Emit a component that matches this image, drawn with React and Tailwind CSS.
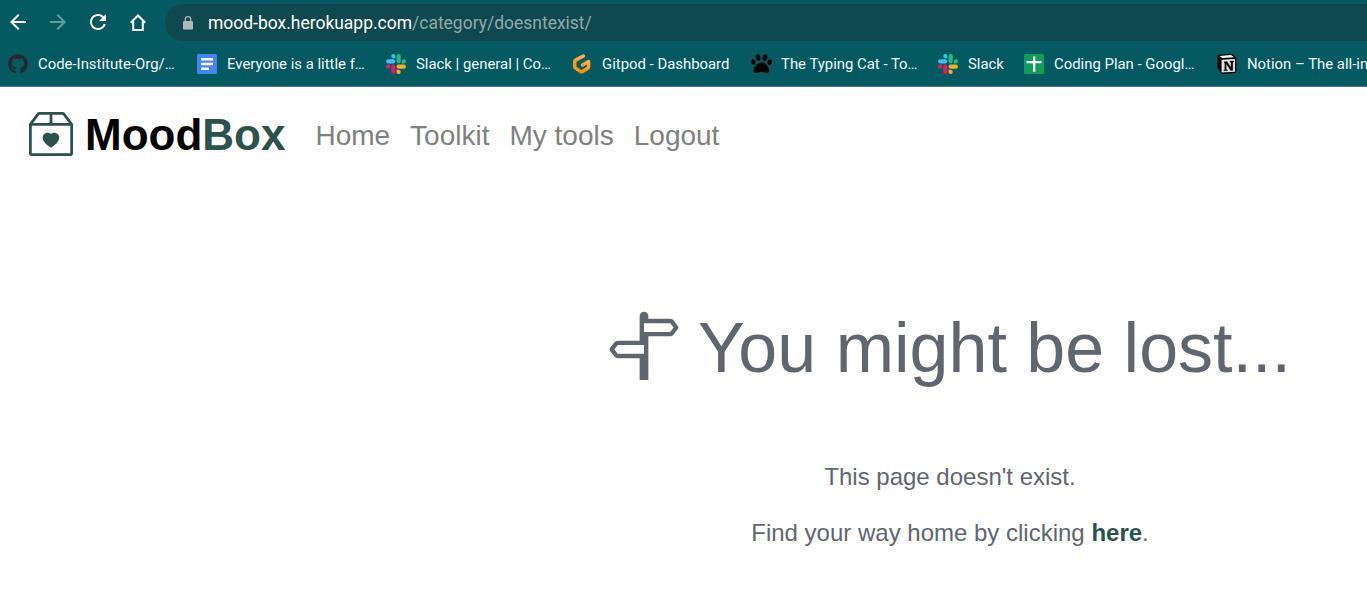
import { BsBox2Heart, BsSignpostSplit } from "react-icons/bs";
import { FaGithub, FaPaw } from "react-icons/fa";
import { MdArrowBack, MdArrowForward, MdRefresh } from "react-icons/md";

function HomeIcon() {
  return (
    <svg viewBox="0 0 16 17" className="h-[17px] w-4" fill="none" stroke="currentColor" strokeWidth="2">
      <path d="M0.7 8.8 8 1.5l7.3 7.3M3.2 7v9h9.6V7" />
    </svg>
  );
}

function LockIcon() {
  return (
    <svg viewBox="0 0 10 14" className="mx-[3px] h-3.5 w-2.5 text-[#b0b7ba]">
      <rect y="5" width="10" height="8.6" rx="1.1" fill="currentColor" />
      <path d="M2.3 5.5V3.4a2.7 2.7 0 0 1 5.4 0v2.1" fill="none" stroke="currentColor" strokeWidth="1.3" />
    </svg>
  );
}

function DocsIcon() {
  return (
    <svg viewBox="0 0 20 20" className="size-5">
      <rect width="20" height="20" rx="1.5" fill="#4285f4" />
      <path d="M4 4h12v2.4H4zM4 8.8h12v2.4H4zM4 13.6h8v2.4H4z" fill="#fff" />
    </svg>
  );
}

function SlackIcon() {
  return (
    <svg viewBox="0 0 24 24" className="size-5">
      <path fill="#e01e5a" d="M5.042 15.165a2.528 2.528 0 0 1-2.52 2.523A2.528 2.528 0 0 1 0 15.165a2.527 2.527 0 0 1 2.522-2.52h2.52v2.52zM6.313 15.165a2.527 2.527 0 0 1 2.521-2.52 2.527 2.527 0 0 1 2.521 2.52v6.313A2.528 2.528 0 0 1 8.834 24a2.528 2.528 0 0 1-2.521-2.522v-6.313z" />
      <path fill="#36c5f0" d="M8.834 5.042a2.528 2.528 0 0 1-2.521-2.52A2.528 2.528 0 0 1 8.834 0a2.528 2.528 0 0 1 2.521 2.522v2.52H8.834zM8.834 6.313a2.528 2.528 0 0 1 2.521 2.521 2.528 2.528 0 0 1-2.521 2.521H2.522A2.528 2.528 0 0 1 0 8.834a2.528 2.528 0 0 1 2.522-2.521h6.312z" />
      <path fill="#2eb67d" d="M18.956 8.834a2.528 2.528 0 0 1 2.522-2.521A2.528 2.528 0 0 1 24 8.834a2.528 2.528 0 0 1-2.522 2.521h-2.522V8.834zM17.688 8.834a2.528 2.528 0 0 1-2.523 2.521 2.527 2.527 0 0 1-2.52-2.521V2.522A2.527 2.527 0 0 1 15.165 0a2.528 2.528 0 0 1 2.523 2.522v6.312z" />
      <path fill="#ecb22e" d="M15.165 18.956a2.528 2.528 0 0 1 2.523 2.522A2.528 2.528 0 0 1 15.165 24a2.527 2.527 0 0 1-2.52-2.522v-2.522h2.52zM15.165 17.688a2.527 2.527 0 0 1-2.52-2.523 2.526 2.526 0 0 1 2.52-2.52h6.313A2.527 2.527 0 0 1 24 15.165a2.528 2.528 0 0 1-2.522 2.523h-6.313z" />
    </svg>
  );
}

function GitpodIcon() {
  return (
    <svg viewBox="0 0 20 20" className="size-5" fill="none">
      <defs>
        <linearGradient id="gitpod" x1="15" y1="2" x2="6" y2="18" gradientUnits="userSpaceOnUse">
          <stop stopColor="#ffb45b" />
          <stop offset="1" stopColor="#ff8a00" />
        </linearGradient>
      </defs>
      <path
        d="M11.3 2 3.6 6.1q-.9.5-.9 1.5v5.2q0 1 .9 1.5l5.1 3.3q.9.5 1.8 0l5.2-3.3q.9-.5.9-1.5V7.4l-6 3.6"
        stroke="url(#gitpod)"
        strokeWidth="3.5"
        strokeLinecap="round"
        strokeLinejoin="round"
      />
    </svg>
  );
}

function SheetIcon() {
  return (
    <svg viewBox="0 0 20 20" className="size-5">
      <rect width="20" height="20" rx="1.5" fill="#0f9d58" />
      <path d="M2.5 7H9V2.5h2.3V7h6.2v2.3h-6.2v8.5H9V9.3H2.5z" fill="#fff" />
    </svg>
  );
}

function NotionIcon() {
  return (
    <svg viewBox="0 0 20 20" className="size-5">
      <path d="M.5 2.2q0-1.3 1.3-1.4L14 0q1 0 1.7.5L18.6 2.9q.7.6.7 1.5v13.2q0 1.3-1.4 1.4L6 19.9q-1 .1-1.6-.7L1.3 15.2Q.5 14.3.5 13.4z" fill="#050505" />
      <path d="M2.4 1.9 14 1.1l3 2.2L5.2 4.1z" fill="#fff" />
      <path d="M4.6 5.8 18 5v12.7L4.6 18.5z" fill="#e4e4e4" />
      <path d="M7 7.7 10 7.5l4 6V8.5L12.8 8.1v-.8l4-.2v.8l-1 .4v8.2l-2 .1-4.6-6.8v5.8l1.3.3v.7l-3.7.2v-.8l1-.4V8.7L7 8.5z" fill="#050505" stroke="#050505" strokeWidth=".3" />
    </svg>
  );
}

const bookmarks = [
  { label: "Code-Institute-Org/…", icon: <FaGithub className="size-5 text-[#24292f]" />, width: "w-[189px]" },
  { label: "Everyone is a little f…", icon: <DocsIcon />, width: "w-[189px]" },
  { label: "Slack | general | Co…", icon: <SlackIcon />, width: "w-[186px]" },
  { label: "Gitpod - Dashboard", icon: <GitpodIcon />, width: "w-[179px]" },
  { label: "The Typing Cat - To…", icon: <FaPaw className="size-[21px] -mr-px text-black" />, width: "w-[187px]" },
  { label: "Slack", icon: <SlackIcon />, width: "w-[86px]" },
  { label: "Coding Plan - Googl…", icon: <SheetIcon />, width: "w-[193px]" },
  { label: "Notion – The all-in", icon: <NotionIcon />, width: "w-[270px]" },
];

function BrowserChrome() {
  return (
    <header className="h-[87px] w-full overflow-hidden border-b border-[#3b7f84] bg-[#045a60] font-['Roboto',sans-serif]">
      <div className="flex h-[45px] items-center pl-1.5 text-white">
        <div className="flex w-[159px] shrink-0 items-center gap-4 pb-px">
          <MdArrowBack className="size-6" />
          <MdArrowForward className="size-6 opacity-40" />
          <MdRefresh className="size-6" />
          <div className="flex size-6 items-center justify-center">
            <HomeIcon />
          </div>
        </div>
        <div className="flex h-[37px] flex-1 items-center rounded-l-full bg-[#0f484e] pl-[15px]">
          <LockIcon />
          <span className="ml-3 pt-px text-[17.48px] whitespace-nowrap text-[#8fa9ac]">
            <span className="text-white">mood-box.herokuapp.com</span>/category/doesntexist/
          </span>
        </div>
      </div>
      <nav className="flex h-[38px] w-max items-center pl-2">
        {bookmarks.map(({ label, icon, width }) => (
          <a key={label} className={`flex shrink-0 items-center gap-2.5 whitespace-nowrap ${width}`}>
            {icon}
            <span className="text-[14.9px] text-[#f0f7f7]">{label}</span>
          </a>
        ))}
      </nav>
    </header>
  );
}

export default function App() {
  return (
    <div className="h-[595px] w-full overflow-hidden bg-white font-['Liberation_Sans',Arial,sans-serif]">
      <BrowserChrome />
      <nav className="flex h-[97px] items-center pl-[28.6px]">
        <BsBox2Heart className="mb-[3px] size-[44px] text-[#2b524d]" />
        <span className="ml-[12.4px] pb-0.5 text-[44px] font-bold text-black">
          Mood<span className="text-[#2b524d]">Box</span>
        </span>
        <div className="ml-[30px] flex gap-5 pt-px text-[28px] text-[#808080]">
          <a>Home</a>
          <a>Toolkit</a>
          <a>My tools</a>
          <a>Logout</a>
        </div>
      </nav>
      <main className="flex w-[1900px] flex-col items-center pt-[122px] text-[#5f6670]">
        <h1 className="flex h-[84px] items-center gap-[19px] text-[70px] leading-[84px]">
          <BsSignpostSplit className="mb-[7px] size-[70px]" />
          You might be lost...
        </h1>
        <p className="mt-[69px] text-2xl leading-9">This page doesn't exist.</p>
        <p className="mt-5 text-2xl leading-9">
          Find your way home by clicking <a className="font-bold text-[#2b524d]">here</a>.
        </p>
      </main>
    </div>
  );
}
